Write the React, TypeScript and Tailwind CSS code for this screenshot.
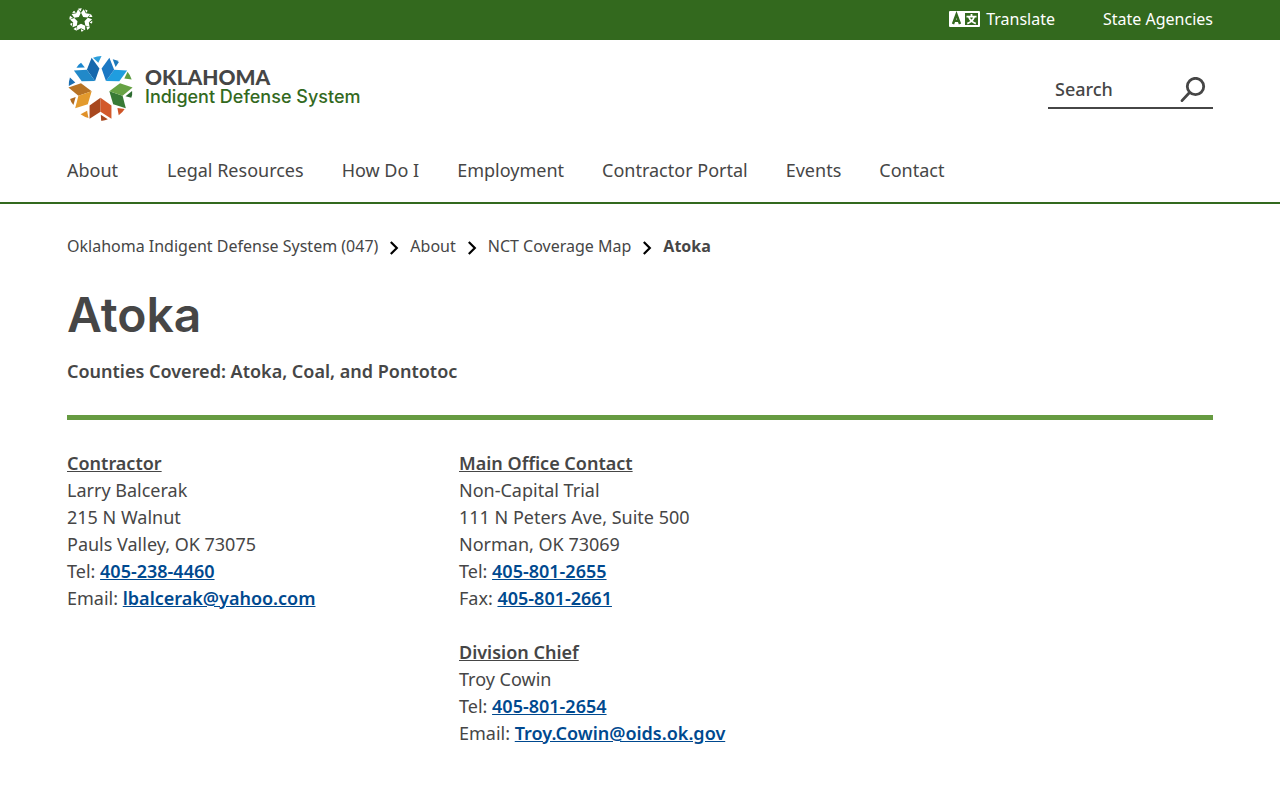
import { useState } from 'react';
import type { ReactNode } from 'react';

const navItems = ['Legal Resources', 'How Do I', 'Employment', 'Contractor Portal', 'Events', 'Contact'];

const crumbs = ['Oklahoma Indigent Defense System (047)', 'About', 'NCT Coverage Map'];

// one entry per arm of the star, clockwise from the bottom
const arms = [
  { angle: 0, left: '#a8481f', right: '#d2592b', notch: '#a8481f', gap: '#cf5527' },
  { angle: 72, left: '#b87324', right: '#e39a2d', notch: '#b06a20', gap: '#e0912a' },
  { angle: 144, left: '#1668ad', right: '#2189c9', notch: '#1b87cf', gap: '#1c6fb2' },
  { angle: 216, left: '#1f9ddf', right: '#1b78c4', notch: '#1b78ba', gap: '#2b9edb' },
  { angle: 288, left: '#387a35', right: '#67a244', notch: '#2d6b30', gap: '#5c9c42' },
];

function StarLogo() {
  return (
    <svg viewBox="20 20 202 202" className="size-[67px] shrink-0" aria-hidden="true">
      {arms.map((arm) => (
        <g key={arm.angle} transform={`rotate(${arm.angle} 121 121)`}>
          <path d="M121 149 L88 172 V212 L121 191 Z" fill={arm.left} />
          <path d="M121 149 L154 172 V212 L121 191 Z" fill={arm.right} />
          <path d="M122 200 L143 214 Q132 219 123 218 Z" fill={arm.notch} />
          <path d="M172 180 L194 183 Q187 194 176 202 Z" fill={arm.gap} />
        </g>
      ))}
    </svg>
  );
}

function StateSeal() {
  return (
    <svg viewBox="20 20 202 202" className="size-6" fill="#fff" aria-hidden="true">
      {arms.map((arm) => (
        <g key={arm.angle} transform={`rotate(${arm.angle} 121 121)`}>
          <path d="M121 152 L88 170 V208 L121 190 L156 208 V170 Z" />
          <path d="M121 196 L145 212 Q132 219 122 217 Z" />
          <path d="M166 176 L197 182 Q188 196 174 205 Z" />
        </g>
      ))}
    </svg>
  );
}

function TranslateIcon() {
  return (
    <svg viewBox="0 0 31 16" className="h-4 w-[31px]" aria-hidden="true">
      <path d="M1 0 H30 Q31 0 31 1 V15 Q31 16 30 16 H1 Q0 16 0 15 V1 Q0 0 1 0 Z" fill="#fff" />
      <path d="M16 2 H29 V14 H16 Z" fill="#33691e" />
      <path d="M4 13 L7.5 3.5 L11 13 M5.2 9.8 H9.8" fill="none" stroke="#33691e" strokeWidth="2.4" />
      <path d="M17.5 5.7 H27.5 M22.5 3 V5.5 M25.2 6 Q23.5 10.5 18.3 12.6 M19.8 6 Q21.5 10.5 26.8 12.6" fill="none" stroke="#fff" strokeWidth="1.8" />
    </svg>
  );
}

function SearchIcon() {
  return (
    <svg viewBox="0 0 26 26" className="size-[26px]" fill="none" stroke="#464646" strokeLinecap="round" aria-hidden="true">
      <circle cx="15.5" cy="9.5" r="8.2" strokeWidth="2.8" />
      <path d="M9.3 15.7 L2 23.6" strokeWidth="2.8" />
    </svg>
  );
}

function Chevron() {
  return (
    <svg viewBox="0 0 10 14" className="mt-[3px] h-[14px] w-[10px]" fill="none" stroke="#000" strokeWidth="2.2" aria-hidden="true">
      <path d="M1.8 1 L7.8 7 L1.8 13" />
    </svg>
  );
}

function TextLink({ href, children }: { href: string; children: ReactNode }) {
  return (
    <a href={href} className="font-semibold text-[#00498f] underline">
      {children}
    </a>
  );
}

export default function App() {
  const [query, setQuery] = useState('');

  return (
    <div className="min-h-screen bg-white font-['Noto_Sans','Open_Sans',sans-serif] text-[#464646]">
      {/* State bar */}
      <div className="flex h-10 items-center justify-between bg-[#33691e] px-[67px] text-base text-white">
        <a href="#" aria-label="Oklahoma.gov" className="px-0.5">
          <StateSeal />
        </a>
        <div className="flex items-center gap-12 pb-0.5">
          <button type="button" className="flex items-center gap-1.5">
            <TranslateIcon />
            Translate
          </button>
          <a href="#">State Agencies</a>
        </div>
      </div>

      <header className="border-b-2 border-[#33691e]">
        <div className="flex items-start justify-between px-[67px] pt-[15px]">
          <a href="#" className="flex items-center gap-[11px]">
            <StarLogo />
            <span className="flex flex-col pb-1">
              <span className="font-['Lato',sans-serif] text-[21px] leading-[21px] font-black">OKLAHOMA</span>
              <span className="font-['Inter',sans-serif] text-[18px] leading-5 font-medium text-[#33691e]">
                Indigent Defense System
              </span>
            </span>
          </a>
          <form
            className="mt-[17px] flex h-[37px] w-[165px] items-center border-b-2 border-[#464646] px-[7px]"
            onSubmit={(e) => e.preventDefault()}
          >
            <input
              type="text"
              aria-label="Search"
              value={query}
              onChange={(e) => setQuery(e.target.value)}
              placeholder="Search"
              className="min-w-0 flex-1 bg-transparent text-[18px] leading-[27px] font-medium outline-none placeholder:text-[#464646]"
            />
            <button type="submit" aria-label="Submit search">
              <SearchIcon />
            </button>
          </form>
        </div>

        <nav className="flex gap-[38px] px-[67px] pt-[35px] pb-[18px] text-[18px] leading-[27px]">
          <a href="#" className="mr-[11px]">About</a>
          {navItems.map((item) => (
            <a key={item} href="#">{item}</a>
          ))}
        </nav>
      </header>

      <main className="px-[67px] pt-[30px] pb-10">
        <nav aria-label="Breadcrumb" className="flex items-center gap-[11px] text-base">
          {crumbs.map((crumb) => (
            <span key={crumb} className="flex items-center gap-[11px]">
              <a href="#">{crumb}</a>
              <Chevron />
            </span>
          ))}
          <span className="font-['Open_Sans',sans-serif] font-bold">Atoka</span>
        </nav>

        <h1 className="mt-[30px] font-['Inter',sans-serif] text-[48px] leading-[54px] font-semibold">Atoka</h1>
        <p className="mt-4 text-[18px] leading-[27px] font-semibold">
          Counties Covered: Atoka, Coal, and Pontotoc
        </p>
        <hr className="mt-[30px] border-t-[5px] border-[#669b41]" />

        <div className="mt-[30px] grid grid-cols-3 gap-[30px] text-[18px] leading-[27px]">
          <section>
            <h2 className="font-semibold underline">Contractor</h2>
            <p>Larry Balcerak</p>
            <p>215 N Walnut</p>
            <p>Pauls Valley, OK 73075</p>
            <p>Tel: <TextLink href="tel:4052384460">405-238-4460</TextLink></p>
            <p>Email: <TextLink href="mailto:lbalcerak@yahoo.com">lbalcerak@yahoo.com</TextLink></p>
          </section>
          <section>
            <h2 className="font-semibold underline">Main Office Contact</h2>
            <p>Non-Capital Trial</p>
            <p>111 N Peters Ave, Suite 500</p>
            <p>Norman, OK 73069</p>
            <p>Tel: <TextLink href="tel:4058012655">405-801-2655</TextLink></p>
            <p>Fax: <TextLink href="tel:4058012661">405-801-2661</TextLink></p>
            <h2 className="mt-[27px] font-semibold underline">Division Chief</h2>
            <p>Troy Cowin</p>
            <p>Tel: <TextLink href="tel:4058012654">405-801-2654</TextLink></p>
            <p>Email: <TextLink href="mailto:Troy.Cowin@oids.ok.gov">Troy.Cowin@oids.ok.gov</TextLink></p>
          </section>
        </div>
      </main>
    </div>
  );
}
